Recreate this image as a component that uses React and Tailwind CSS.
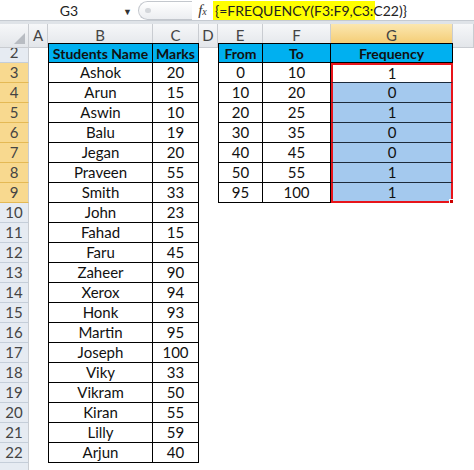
import React from 'react'

const STUDENTS = [
  ['Ashok', 20], ['Arun', 15], ['Aswin', 10], ['Balu', 19], ['Jegan', 20],
  ['Praveen', 55], ['Smith', 33], ['John', 23], ['Fahad', 15], ['Faru', 45],
  ['Zaheer', 90], ['Xerox', 94], ['Honk', 93], ['Martin', 95], ['Joseph', 100],
  ['Viky', 33], ['Vikram', 50], ['Kiran', 55], ['Lilly', 59], ['Arjun', 40],
]

const BINS = [
  [0, 10, 1], [10, 20, 0], [20, 25, 1], [30, 35, 0], [40, 45, 0], [50, 55, 1], [95, 100, 1],
]

const COLS = 'grid grid-cols-[29px_19px_105px_46px_19px_45px_68px_122px_1fr]'
const ROWS = Array.from({ length: 22 }, (_, i) => i + 2)

function ColHeader({ label, active }) {
  return (
    <div
      className={
        active
          ? 'flex items-center justify-center border-r border-b border-r-[#c9ccd1] border-b-[#e2a93d] bg-gradient-to-b from-[#fbe7b0] to-[#f3c868] text-[#444]'
          : 'flex items-center justify-center border-r border-b border-[#c9ccd1] bg-gradient-to-b from-[#f6f7f9] to-[#e3e6ea] text-[#444]'
      }
    >
      {label}
    </div>
  )
}

function RowHeader({ n }) {
  const sel = n >= 3 && n <= 9
  return (
    <div
      className={
        sel
          ? 'flex items-center justify-center border-r border-b border-r-[#c9ccd1] border-b-[#e4b955] bg-[#f8d98f] text-[#444]'
          : 'flex items-center justify-center border-r border-b border-r-[#c9ccd1] border-b-[#c5ced9] bg-[#e6ebf2] text-[#444]'
      }
    >
      {n <= 22 ? n : ''}
    </div>
  )
}

function SheetRow({ n }) {
  const student = n >= 3 && n <= 22 ? STUDENTS[n - 3] : null
  const bin = n >= 3 && n <= 9 ? BINS[n - 3] : null
  const head = n === 2
  const inStudents = head || student
  const inBins = head || bin

  const cell = 'flex items-center justify-center'
  const blue = 'bg-[#00b0f0] font-bold text-[14px]'

  let gClass = cell
  if (head) gClass += ' border-r border-t border-b border-black ' + blue
  else if (bin) {
    gClass += ' border-x-2 border-x-[#e8141a] border-b border-b-[#1b2a3a]'
    if (n === 3) gClass += ' border-t-2 border-t-[#e8141a] bg-white'
    else gClass += ' bg-[#a4c9ee]'
    if (n === 9) gClass += ' border-b-2 border-b-[#e8141a] relative'
  }

  return (
    <>
      <RowHeader n={n} />
      <div />
      <div className={inStudents ? `${cell} border-l border-r border-b border-black ${head ? 'border-t ' + blue : ''}` : ''}>
        {head ? 'Students Name' : student?.[0]}
      </div>
      <div className={inStudents ? `${cell} border-r border-b border-black ${head ? 'border-t ' + blue : ''}` : ''}>
        {head ? 'Marks' : student?.[1]}
      </div>
      <div />
      <div className={inBins ? `${cell} border-l border-r border-b border-black ${head ? 'border-t ' + blue : ''}` : ''}>
        {head ? 'From' : bin?.[0]}
      </div>
      <div className={inBins ? `${cell} border-r border-b border-black ${head ? 'border-t ' + blue : ''}` : ''}>
        {head ? 'To' : bin?.[1]}
      </div>
      <div className={inBins ? gClass : ''}>
        {head ? 'Frequency' : bin?.[2]}
        {n === 9 && <span className="absolute -right-[3px] -bottom-[3px] h-[5px] w-[5px] border border-white bg-[#c00]" />}
      </div>
      <div />
    </>
  )
}

export default function App() {
  return (
    <div className="h-[470px] w-[474px] overflow-hidden bg-white font-['Lato','Liberation_Sans',sans-serif] text-[15px] text-[#111]">
      {/* formula bar */}
      <div className="flex h-[21px] items-center border-b border-[#c5cad1] bg-white">
        <div className="relative flex h-full w-[138px] items-center justify-center text-[14px] text-[#222]">
          G3
          <span className="absolute right-[6px] top-[5px] text-[9px] text-[#333]">▼</span>
        </div>
        <div className="flex h-[19px] w-[54px] items-center rounded-l-full border border-r-0 border-[#c3c7cd] bg-gradient-to-b from-white to-[#eceef1] pl-[6px]">
          <span className="h-[5px] w-[6px] rounded-full bg-[#d4d7db]" />
        </div>
        <div className="flex w-[21px] items-baseline justify-center font-['Liberation_Serif',serif] italic leading-none text-[#333]">
          <span className="text-[15px]">f</span>
          <span className="text-[10px]">x</span>
        </div>
        <div className="flex h-[19px] w-[162px] items-center bg-[#ffff00] pl-[2px] text-[14px] text-[#222]">
          {'{=FREQUENCY(F3:F9,C3:C22)}'}
        </div>
      </div>
      <div className="h-[3px] bg-[#dfe3e8]" />
      {/* column headers */}
      <div className={`${COLS} h-[19px]`}>
        <div className="relative border-r border-b border-[#c9ccd1] bg-gradient-to-b from-[#f6f7f9] to-[#e3e6ea]">
          <svg className="absolute right-[3px] bottom-[3px]" width="11" height="11" viewBox="0 0 11 11">
            <polygon points="11,0 11,11 0,11" fill="#b8bcc2" />
          </svg>
        </div>
        <ColHeader label="A" />
        <ColHeader label="B" />
        <ColHeader label="C" />
        <ColHeader label="D" />
        <ColHeader label="E" />
        <ColHeader label="F" />
        <ColHeader label="G" active />
        <ColHeader label="" />
      </div>
      {/* cells */}
      <div className={`${COLS} auto-rows-[20px]`}>
        {ROWS.map((n) => (
          <SheetRow key={n} n={n} />
        ))}
      </div>
    </div>
  )
}
